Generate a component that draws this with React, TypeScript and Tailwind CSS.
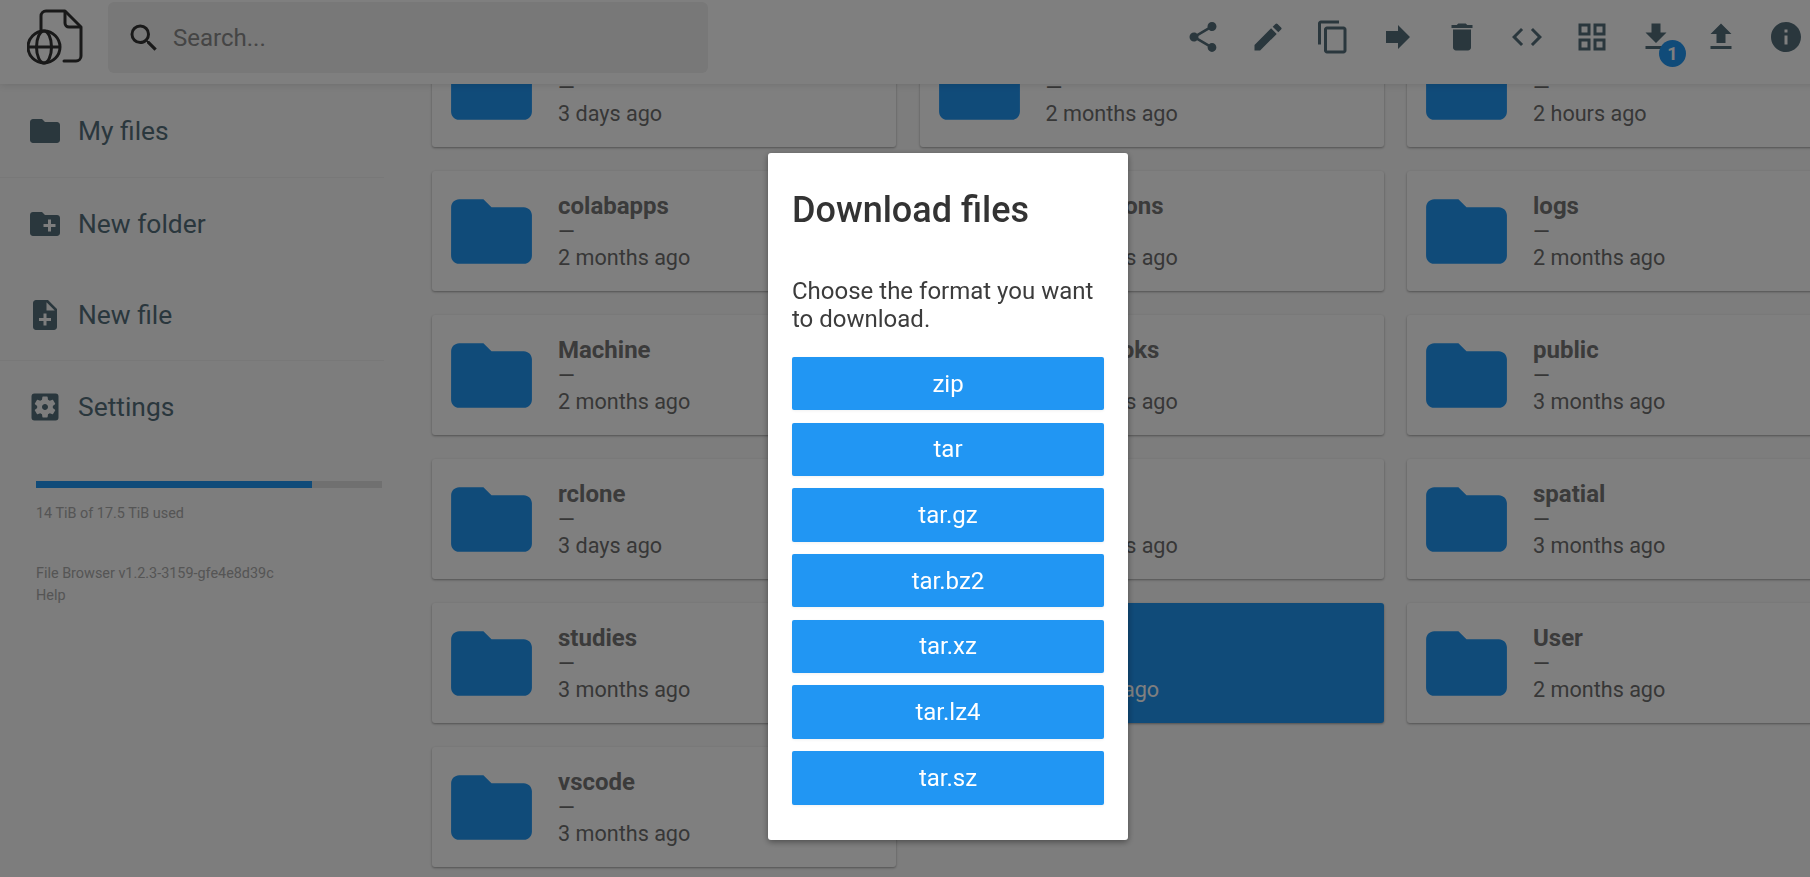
import {
  MdCode,
  MdContentCopy,
  MdCreateNewFolder,
  MdDelete,
  MdFileDownload,
  MdFileUpload,
  MdFolder,
  MdForward,
  MdInfo,
  MdModeEdit,
  MdNoteAdd,
  MdOutlineGridView,
  MdSearch,
  MdSettingsApplications,
  MdShare,
} from "react-icons/md";

const folders = [
  { name: "apps", date: "3 days ago" },
  { name: "backups", date: "2 months ago" },
  { name: "cache", date: "2 hours ago" },
  { name: "colabapps", date: "2 months ago" },
  { name: "collections", date: "2 months ago" },
  { name: "logs", date: "2 months ago" },
  { name: "Machine", date: "2 months ago" },
  { name: "notebooks", date: "2 months ago" },
  { name: "public", date: "3 months ago" },
  { name: "rclone", date: "3 days ago" },
  { name: "scripts", date: "2 months ago" },
  { name: "spatial", date: "3 months ago" },
  { name: "studies", date: "3 months ago" },
  { name: "temp", date: "2 hours ago", selected: true },
  { name: "User", date: "2 months ago" },
  { name: "vscode", date: "3 months ago" },
];

const formats = ["zip", "tar", "tar.gz", "tar.bz2", "tar.xz", "tar.lz4", "tar.sz"];

const Logo = () => (
  <svg viewBox="0 0 56 56" className="w-[56px] h-[56px] mt-[9px] shrink-0" fill="none" stroke="#333" strokeWidth="3">
    <path d="M14 22V7a5 5 0 0 1 5-5h19l16 16v29a5 5 0 0 1-5 5H37" strokeLinejoin="round" strokeLinecap="round" />
    <path d="M38 2v12a4 4 0 0 0 4 4h12" strokeLinejoin="round" />
    <circle cx="17" cy="38" r="16" />
    <ellipse cx="17" cy="38" rx="7.5" ry="16" />
    <path d="M1 38h32" />
  </svg>
);

const toolbar = [MdShare, MdModeEdit, MdContentCopy, MdForward, MdDelete, MdCode, MdOutlineGridView, MdFileDownload, MdFileUpload, MdInfo];

const Header = () => (
  <header className="relative z-10 h-[84px] shrink-0 bg-white shadow-[0_0_8px_rgba(0,0,0,0.15)] flex items-start pl-[27px] -mr-2">
    <Logo />
    <div className="ml-[25px] mt-[2px] w-[600px] h-[71px] bg-[#f0f0f0] rounded-md flex items-center pl-[18px] gap-[11px]">
      <MdSearch size={36} className="text-[#333]" />
      <span className="text-[24px] text-[#8a8a8a] mt-[1px]">Search...</span>
    </div>
    <div className="ml-auto mt-[1px] flex">
      {toolbar.map((Icon, i) => (
        <div key={i} className="relative w-[64.7px] h-[72px] flex items-center justify-center text-[#546e7a]">
          <Icon size={36} />
          {Icon === MdFileDownload && (
            <span className="absolute left-[35px] top-[39px] w-[27px] h-[27px] rounded-full bg-[#2196f3] text-white text-[18px] font-bold flex items-center justify-center">
              1
            </span>
          )}
        </div>
      ))}
    </div>
  </header>
);

const SideItem = ({ icon: Icon, label, tall }: { icon: typeof MdFolder; label: string; tall?: boolean }) => (
  <div className={`${tall ? "h-[92px]" : "h-[91px]"} flex items-center pl-[27px] gap-[15px] text-[#546e7a]`}>
    <Icon size={36} />
    <span className="text-[26.4px] mt-[2px]">{label}</span>
  </div>
);

const Sidebar = () => (
  <aside className="w-[384px] shrink-0 pt-[1px]">
    <div className="border-b border-[#f0f0f0]">
      <SideItem icon={MdFolder} label="My files" tall />
    </div>
    <div className="border-b border-[#f0f0f0]">
      <SideItem icon={MdCreateNewFolder} label="New folder" />
      <SideItem icon={MdNoteAdd} label="New file" />
    </div>
    <SideItem icon={MdSettingsApplications} label="Settings" tall />
    <div className="pl-9 mt-[28px] text-[14.4px] text-[#aaa] w-[382px]">
      <div className="h-[7px] bg-[#e0e0e0]">
        <div className="h-full w-[79.8%] bg-[#2196f3]" />
      </div>
      <p className="mt-[15px] leading-[21px]">14 TiB of 17.5 TiB used</p>
      <p className="mt-[39px] leading-[22px]">File Browser v1.2.3-3159-gfe4e8d39c</p>
      <p className="leading-[22px]">Help</p>
    </div>
  </aside>
);

const FolderCard = ({ name, date, selected }: { name: string; date: string; selected?: boolean }) => (
  <div
    className={`h-[120px] rounded-[3px] shadow-[0_1px_3px_rgba(0,0,0,0.12),0_1px_2px_rgba(0,0,0,0.24)] flex items-center pl-[11px] ${
      selected ? "bg-[#2196f3] text-white" : "bg-white text-[#6f6f6f]"
    }`}
  >
    <MdFolder size={97} className={selected ? "text-white" : "text-[#2196f3]"} />
    <div className="ml-[18px] flex flex-col">
      <span className={`text-[24px] font-bold leading-[30px] mt-[1px] ${selected ? "text-white" : "text-[#767676]"}`}>{name}</span>
      <span className="text-[21.6px] leading-[22px]">—</span>
      <span className="text-[21.6px] leading-[29px]">{date}</span>
    </div>
  </div>
);

const DownloadModal = () => (
  <div className="fixed inset-0 z-20 bg-black/50">
    <div className="absolute left-[768px] top-[153px] w-[360px] h-[687px] bg-white rounded-[3px] shadow-[0_2px_6px_rgba(0,0,0,0.4)] p-6">
      <h2 className="text-[36px] font-medium text-[#333] leading-[42px] mt-[12px]">Download files</h2>
      <p className="mt-[46px] text-[24px] leading-[28px] text-[#3c3c3c]">Choose the format you want to download.</p>
      <div className="mt-[24px] flex flex-col gap-[12.3px]">
        {formats.map((f) => (
          <button
            key={f}
            className="h-[53.4px] rounded-[2px] bg-[#2196f3] text-white text-[24px] shadow-[0_1px_3px_rgba(0,0,0,0.06)]"
          >
            {f}
          </button>
        ))}
      </div>
    </div>
  </div>
);

export default function App() {
  return (
    <div className="h-[877px] w-[1810px] overflow-hidden bg-[#fafafa] flex flex-col font-['Roboto',sans-serif]">
      <Header />
      <div className="flex flex-1 min-h-0">
        <Sidebar />
        <main className="min-w-0 flex-1 pl-[48px]">
          <div className="-mt-[57px] grid grid-cols-[464px_464px_464px] gap-x-[23.5px] gap-y-[24px]">
            {folders.map((f) => (
              <FolderCard key={f.name} {...f} />
            ))}
          </div>
        </main>
      </div>
      <DownloadModal />
    </div>
  );
}
